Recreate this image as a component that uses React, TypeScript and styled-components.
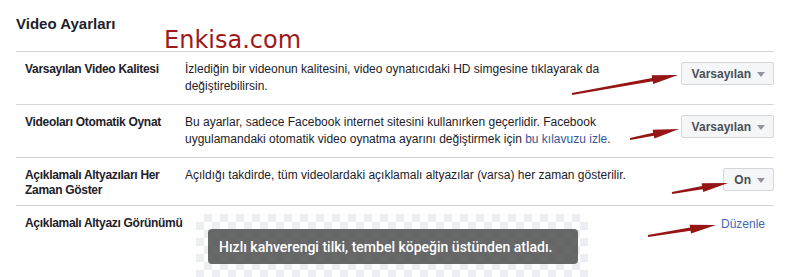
import styled, { createGlobalStyle } from 'styled-components';

const GlobalStyle = createGlobalStyle`
  html, body {
    margin: 0;
    padding: 0;
    background: #ffffff;
  }
  body {
    font-family: "Liberation Sans", Arial, sans-serif;
    color: #1d2129;
  }
`;

const Page = styled.div`
  position: relative;
  width: 786px;
  height: 277px;
  overflow: hidden;
  padding: 14px 12px 0 16px;
  box-sizing: border-box;
`;

const Title = styled.h2`
  margin: 0;
  height: 37px;
  font-size: 15px;
  font-weight: bold;
  line-height: 20px;
  color: #1d2129;
`;

const Watermark = styled.div`
  position: absolute;
  left: 164px;
  top: 26px;
  font-family: "DejaVu Sans", Verdana, sans-serif;
  font-size: 24px;
  line-height: 28px;
  color: #9e1a1a;
`;

const Table = styled.div`
  width: 758px;
`;

const Row = styled.div<{ $tight?: boolean }>`
  display: grid;
  grid-template-columns: 160px 1fr auto;
  align-items: start;
  border-top: 1px solid #d3d5d8;
  padding: 9px 0 ${(p) => (p.$tight ? 7 : 9)}px 9px;
`;

const Label = styled.div`
  font-size: 12px;
  font-weight: bold;
  line-height: 15px;
  letter-spacing: -0.3px;
  padding-top: 1px;
`;

const Desc = styled.div`
  font-size: 12px;
  line-height: 17px;
  max-width: 470px;
`;

const Link = styled.a`
  color: #365899;
  text-decoration: none;
`;

const SelectButton = styled.button`
  display: flex;
  align-items: center;
  gap: 6px;
  height: 23px;
  margin-top: 1px;
  padding: 0 8px 0 10px;
  background: #f5f6f7;
  border: 1px solid #d4d7db;
  border-radius: 2px;
  font-family: "Liberation Sans", Arial, sans-serif;
  font-size: 12px;
  font-weight: bold;
  color: #4b4f56;
`;

const Caret = styled.span`
  width: 0;
  height: 0;
  border-left: 4px solid transparent;
  border-right: 4px solid transparent;
  border-top: 5px solid #90949c;
  margin-top: 1px;
`;

const Preview = styled.div`
  width: 392px;
  height: 70px;
  margin-left: 11px;
  margin-top: -1px;
  padding: 15px 0 0 12px;
  box-sizing: border-box;
  background-color: #ffffff;
  background-image: conic-gradient(
    #eceef1 25%,
    #ffffff 0 50%,
    #eceef1 0 75%,
    #ffffff 0
  );
  background-size: 16px 16px;
`;

const Caption = styled.div`
  display: inline-flex;
  align-items: center;
  width: 370px;
  height: 35px;
  padding-left: 11px;
  box-sizing: border-box;
  background: rgba(78, 78, 78, 0.85);
  border-radius: 4px;
  color: #ffffff;
  font-family: Roboto, "Liberation Sans", sans-serif;
  font-size: 14px;
  font-weight: 500;
`;

const EditLink = styled.a`
  font-size: 12px;
  line-height: 17px;
  color: #4267b2;
  text-decoration: none;
  padding-right: 9px;
  margin-top: 1px;
`;

const Overlay = styled.svg`
  position: absolute;
  left: 0;
  top: 0;
  pointer-events: none;
`;

type ArrowProps = { x1: number; y1: number; x2: number; y2: number };

const Arrow = ({ x1, y1, x2, y2 }: ArrowProps) => {
  const dx = x2 - x1;
  const dy = y2 - y1;
  const len = Math.hypot(dx, dy);
  const ux = dx / len;
  const uy = dy / len;
  const nx = -uy;
  const ny = ux;
  const head = 26;
  const bx = x2 - ux * head;
  const by = y2 - uy * head;
  const pts = [
    [x1 + nx * 1, y1 + ny * 1],
    [bx + nx * 1.6, by + ny * 1.6],
    [bx + nx * 4.5, by + ny * 4.5],
    [x2, y2],
    [bx - nx * 4.5, by - ny * 4.5],
    [bx - nx * 1.6, by - ny * 1.6],
    [x1 - nx * 1, y1 - ny * 1],
  ]
    .map((p) => p.join(','))
    .join(' ');
  return <polygon points={pts} fill="#951515" />;
};

const arrows: ArrowProps[] = [
  { x1: 572, y1: 94, x2: 678, y2: 75 },
  { x1: 630, y1: 139, x2: 679, y2: 129 },
  { x1: 672, y1: 193, x2: 728, y2: 183 },
  { x1: 648, y1: 236, x2: 716, y2: 225 },
];

const App = () => {
  return (
    <Page>
      <GlobalStyle />
      <Title>Video Ayarları</Title>
      <Watermark>Enkisa.com</Watermark>
      <Table>
        <Row>
          <Label>Varsayılan Video Kalitesi</Label>
          <Desc>
            İzlediğin bir videonun kalitesini, video oynatıcıdaki HD simgesine
            tıklayarak da değiştirebilirsin.
          </Desc>
          <SelectButton>
            Varsayılan <Caret />
          </SelectButton>
        </Row>
        <Row>
          <Label>Videoları Otomatik Oynat</Label>
          <Desc>
            Bu ayarlar, sadece Facebook internet sitesini kullanırken
            geçerlidir. Facebook uygulamandaki otomatik video oynatma ayarını
            değiştirmek için <Link href="#">bu kılavuzu izle</Link>.
          </Desc>
          <SelectButton>
            Varsayılan <Caret />
          </SelectButton>
        </Row>
        <Row $tight>
          <Label>Açıklamalı Altyazıları Her Zaman Göster</Label>
          <Desc>
            Açıldığı takdirde, tüm videolardaki açıklamalı altyazılar (varsa)
            her zaman gösterilir.
          </Desc>
          <SelectButton>
            On <Caret />
          </SelectButton>
        </Row>
        <Row>
          <Label>Açıklamalı Altyazı Görünümü</Label>
          <Preview>
            <Caption>Hızlı kahverengi tilki, tembel köpeğin üstünden atladı.</Caption>
          </Preview>
          <EditLink href="#">Düzenle</EditLink>
        </Row>
      </Table>
      <Overlay width="786" height="277" viewBox="0 0 786 277">
        {arrows.map((a, i) => (
          <Arrow key={i} {...a} />
        ))}
      </Overlay>
    </Page>
  );
};

export default App;
